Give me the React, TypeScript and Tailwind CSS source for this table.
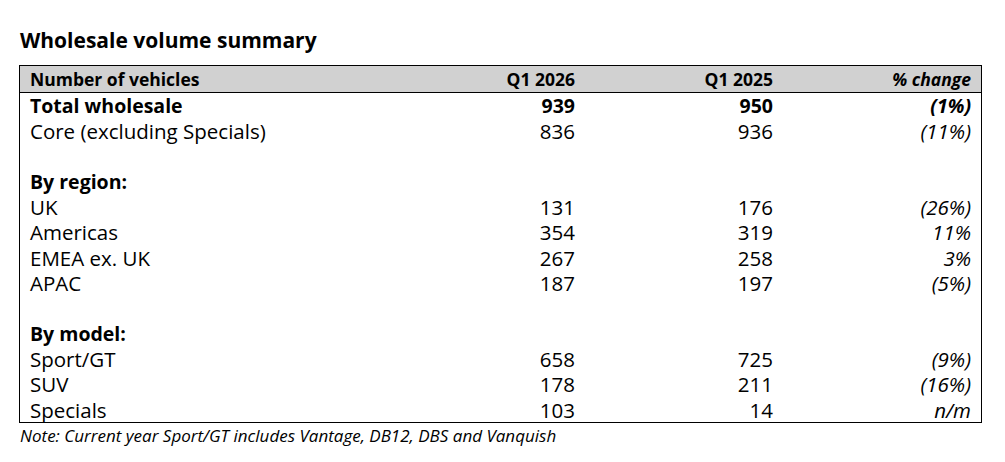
import React from "react";

type Row = { label?: string; a?: string; b?: string; c?: string; bold?: boolean };

const rows: Row[] = [
  { label: "Total wholesale", a: "939", b: "950", c: "(1%)", bold: true },
  { label: "Core (excluding Specials)", a: "836", b: "936", c: "(11%)" },
  {},
  { label: "By region:", bold: true },
  { label: "UK", a: "131", b: "176", c: "(26%)" },
  { label: "Americas", a: "354", b: "319", c: "11%" },
  { label: "EMEA ex. UK", a: "267", b: "258", c: "3%" },
  { label: "APAC", a: "187", b: "197", c: "(5%)" },
  {},
  { label: "By model:", bold: true },
  { label: "Sport/GT", a: "658", b: "725", c: "(9%)" },
  { label: "SUV", a: "178", b: "211", c: "(16%)" },
  { label: "Specials", a: "103", b: "14", c: "n/m" },
];

export default function App() {
  return (
    <div
      className="w-[1005px] h-[462px] bg-white text-black"
      style={{ fontFamily: "'Open Sans', sans-serif" }}
    >
      <div className="pt-[26px] pl-[20px] pr-[23px]">
        <div className="text-[21px] font-bold leading-[28px]">Wholesale volume summary</div>
        <div className="mt-[11px] ml-[-1px] border border-black">
          <div className="grid grid-cols-[1fr_198px_198px_198px] px-[10px] h-[27px] items-center bg-[#d1d1d1] border-b border-black text-[17.5px] font-bold leading-[24px]">
            <div>Number of vehicles</div>
            <div className="text-right">Q1 2026</div>
            <div className="text-right">Q1 2025</div>
            <div className="text-right italic">% change</div>
          </div>
          {rows.map((r, i) => (
            <div
              key={i}
              className={`grid grid-cols-[1fr_198px_198px_198px] px-[10px] h-[25.33px] items-center leading-[24px] ${r.bold ? "font-bold text-[19.5px]" : "text-[20.5px]"}`}
            >
              <div>{r.label}</div>
              <div className="text-right">{r.a}</div>
              <div className="text-right">{r.b}</div>
              <div className="text-right italic">{r.c}</div>
            </div>
          ))}
        </div>
        <div className="mt-[2px] text-[17px] italic leading-[22px]">
          Note: Current year Sport/GT includes Vantage, DB12, DBS and Vanquish
        </div>
      </div>
    </div>
  );
}
